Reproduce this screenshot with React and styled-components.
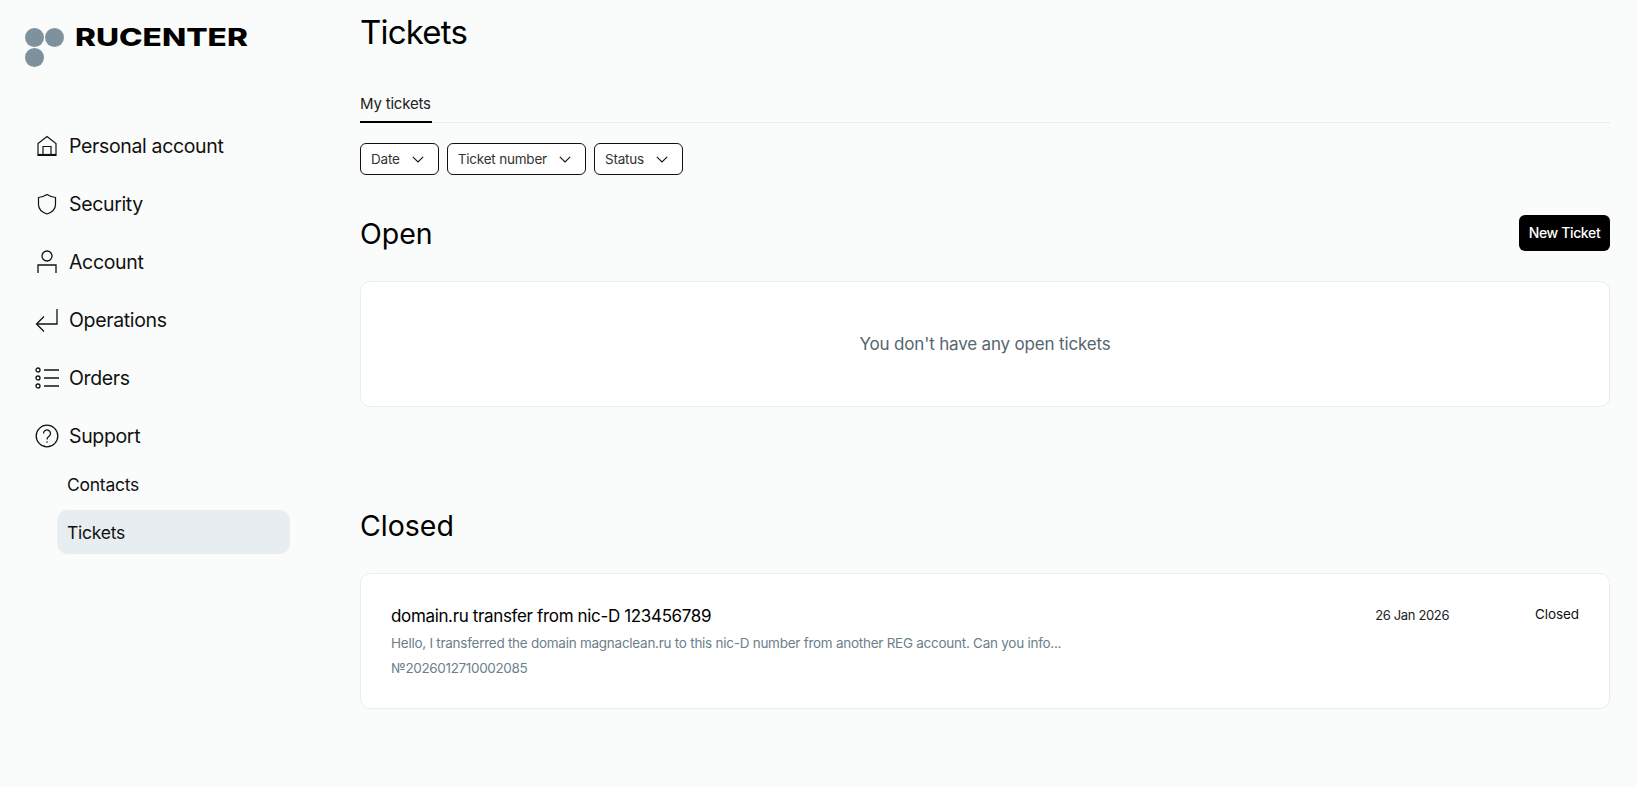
import React from 'react';
import styled, { createGlobalStyle } from 'styled-components';

const GlobalStyle = createGlobalStyle`
  html, body {
    margin: 0;
    padding: 0;
    background: #fafcfb;
  }
  body {
    font-family: Inter, "Noto Sans", "Liberation Sans", sans-serif;
    color: #000;
  }
  * {
    box-sizing: border-box;
  }
`;

const Chevron = () => (
  <svg width="12" height="7" viewBox="0 0 12 7" fill="none">
    <path d="M.8.8L6 6 11.200.8" stroke="#111" strokeWidth="1.1" />
  </svg>
);

const HomeIcon = () => (
  <svg width="22" height="22" viewBox="0 0 22 22" fill="none" stroke="#111" strokeWidth="1.2">
    <path d="M2 20.500V8.500L11 1.500l9 7v12z" />
    <path d="M7 20.500v-9h8v9" />
    <path d="M2 19.500h18" />
  </svg>
);

const ShieldIcon = () => (
  <svg width="22" height="22" viewBox="0 0 22 22" fill="none" stroke="#111" strokeWidth="1.2">
    <path d="M2.500 4.500Q7 4 11 1.500q4 2.500 8.500 3v7c0 4.500-4 8-8.500 9.500-4.500-1.500-8.500-5-8.500-9.500z" />
  </svg>
);

const UserIcon = () => (
  <svg width="22" height="24" viewBox="0 0 22 24" fill="none" stroke="#111" strokeWidth="1.3">
    <circle cx="11" cy="6" r="5" />
    <path d="M2 23v-8h18v8" />
  </svg>
);

const ReturnIcon = () => (
  <svg width="24" height="24" viewBox="0 0 24 24" fill="none" stroke="#111" strokeWidth="1.3">
    <path d="M22 1v15H2" />
    <path d="M9 8.500L1.500 16 9 23.500" />
  </svg>
);

const ListIcon = () => (
  <svg width="24" height="22" viewBox="0 0 24 22" fill="none" stroke="#111" strokeWidth="1.3">
    <circle cx="3" cy="3" r="2" />
    <circle cx="3" cy="11" r="2" />
    <circle cx="3" cy="19" r="2" />
    <path d="M9 3h15M9 11h15M9 19h15" />
  </svg>
);

const HelpIcon = () => (
  <svg width="24" height="24" viewBox="0 0 24 24" fill="none" stroke="#111" strokeWidth="1.3">
    <circle cx="12" cy="12" r="10.800" />
    <path d="M8.500 9.500a3.500 3.500 0 1 1 5.500 2.800c-1.300.9-2 1.500-2 3.200" />
    <circle cx="12" cy="18" r=".8" fill="#111" stroke="none" />
  </svg>
);

const Page = styled.div`
  display: flex;
  width: 1637px;
  height: 787px;
  overflow: hidden;
`;

const Sidebar = styled.aside`
  width: 360px;
  flex: none;
  padding: 28px 0 0 25px;
`;

const LogoRow = styled.div`
  display: flex;
  gap: 11px;
`;

const Dots = styled.div`
  display: grid;
  grid-template-columns: 19px 19px;
  grid-auto-rows: 19px;
  gap: 1px;
`;

const Dot = styled.span`
  border-radius: 50%;
  background: #7d929c;
`;

const LogoText = styled.div`
  font-family: Inter, sans-serif;
  font-weight: 800;
  font-size: 24px;
  line-height: 20px;
  height: 20px;
  transform: scaleX(1.32);
  transform-origin: left center;
`;

const Nav = styled.nav`
  margin-top: 50px;
  display: flex;
  flex-direction: column;
`;

const NavItem = styled.a`
  display: flex;
  align-items: center;
  height: 58px;
  font-size: 19.500px;
  letter-spacing: -0.35px;
  color: #111;
`;

const NavIcon = styled.span`
  display: flex;
  justify-content: center;
  width: 24px;
  margin-left: 10px;
  margin-right: 10px;
`;

const SubNav = styled.div`
  margin: -3px 0 0 32px;
  display: flex;
  flex-direction: column;
  gap: 4px;
  width: 233px;
`;

const SubItem = styled.a`
  display: flex;
  align-items: center;
  height: 44px;
  padding-left: 10px;
  border-radius: 10px;
  font-size: 17.500px;
  letter-spacing: -0.25px;
  color: #111;
  background: ${(p) => (p.$active ? '#e7edf0' : 'transparent')};
`;

const Main = styled.main`
  width: 1250px;
  flex: none;
`;

const Title = styled.h1`
  margin: 0;
  height: 92px;
  padding-top: 10px;
  font-size: 33px;
  line-height: 44px;
  font-weight: 400;
  letter-spacing: -0.8px;
`;

const Tabs = styled.div`
  display: flex;
  height: 31px;
  border-bottom: 1px solid #e8edee;
`;

const Tab = styled.div`
  height: 31px;
  font-size: 15px;
  line-height: 24px;
  letter-spacing: -0.2px;
  color: #222;
  border-bottom: 2px solid #000;
  padding-right: 1px;
`;

const Filters = styled.div`
  display: flex;
  gap: 8px;
  margin-top: 20px;
`;

const Filter = styled.button`
  display: flex;
  align-items: center;
  gap: 12px;
  height: 32px;
  padding: 0 14px 0 10px;
  background: #fff;
  border: 1px solid #111;
  border-radius: 6px;
  font-family: inherit;
  font-size: 13.500px;
  letter-spacing: -0.2px;
  color: #333;
`;

const SectionHead = styled.div`
  display: flex;
  justify-content: space-between;
  align-items: center;
  height: 36px;
  margin-top: ${(p) => p.$top}px;
`;

const SectionTitle = styled.h2`
  margin: 0;
  font-size: 28.500px;
  font-weight: 400;
  letter-spacing: 0;
`;

const NewTicket = styled.button`
  width: 91px;
  height: 36px;
  padding: 0 0 1px;
  border: none;
  border-radius: 6px;
  background: #000;
  color: #fff;
  font-family: inherit;
  font-size: 14px;
  font-weight: 500;
  letter-spacing: -0.35px;
`;

const EmptyCard = styled.div`
  display: flex;
  align-items: center;
  justify-content: center;
  height: 126px;
  margin-top: 30px;
  background: #fff;
  border: 1px solid #e8edee;
  border-radius: 10px;
  font-size: 17px;
  letter-spacing: -0.17px;
  color: #55666e;
`;

const TicketCard = styled.div`
  display: flex;
  justify-content: space-between;
  height: 136px;
  margin-top: 30px;
  padding: 30px;
  background: #fff;
  border: 1px solid #e8edee;
  border-radius: 10px;
`;

const TicketBody = styled.div`
  display: flex;
  flex-direction: column;
`;

const TicketTitle = styled.div`
  font-size: 17px;
  line-height: 24px;
  letter-spacing: -0.35px;
`;

const TicketText = styled.div`
  margin-top: 3px;
  font-size: 13.500px;
  line-height: 24px;
  letter-spacing: -0.26px;
  color: #6c8089;
`;

const TicketNumber = styled(TicketText)`
  margin-top: 1px;
  letter-spacing: -0.35px;
`;

const TicketMeta = styled.div`
  display: flex;
  gap: 86px;
`;

const TicketDate = styled.div`
  font-size: 13px;
  line-height: 22px;
  letter-spacing: -0.35px;
  color: #222;
`;

const TicketStatus = styled.div`
  font-size: 13.500px;
  line-height: 20px;
  letter-spacing: -0.1px;
  color: #111;
`;

const navItems = [
  ['Personal account', <HomeIcon />],
  ['Security', <ShieldIcon />],
  ['Account', <UserIcon />],
  ['Operations', <ReturnIcon />],
  ['Orders', <ListIcon />],
  ['Support', <HelpIcon />],
];

const App = () => {
  return (
    <Page>
      <GlobalStyle />
      <Sidebar>
        <LogoRow>
          <Dots>
            <Dot />
            <Dot />
            <Dot />
          </Dots>
          <LogoText>RUCENTER</LogoText>
        </LogoRow>
        <Nav>
          {navItems.map(([label, icon]) => (
            <NavItem key={label}>
              <NavIcon>{icon}</NavIcon>
              {label}
            </NavItem>
          ))}
        </Nav>
        <SubNav>
          <SubItem>Contacts</SubItem>
          <SubItem $active>Tickets</SubItem>
        </SubNav>
      </Sidebar>
      <Main>
        <Title>Tickets</Title>
        <Tabs>
          <Tab>My tickets</Tab>
        </Tabs>
        <Filters>
          <Filter>Date <Chevron /></Filter>
          <Filter>Ticket number <Chevron /></Filter>
          <Filter>Status <Chevron /></Filter>
        </Filters>
        <SectionHead $top={40}>
          <SectionTitle>Open</SectionTitle>
          <NewTicket>New Ticket</NewTicket>
        </SectionHead>
        <EmptyCard>You don't have any open tickets</EmptyCard>
        <SectionHead $top={100}>
          <SectionTitle>Closed</SectionTitle>
        </SectionHead>
        <TicketCard>
          <TicketBody>
            <TicketTitle>domain.ru transfer from nic-D 123456789</TicketTitle>
            <TicketText>Hello, I transferred the domain magnaclean.ru to this nic-D number from another REG account. Can you info...</TicketText>
            <TicketNumber>№2026012710002085</TicketNumber>
          </TicketBody>
          <TicketMeta>
            <TicketDate>26 Jan 2026</TicketDate>
            <TicketStatus>Closed</TicketStatus>
          </TicketMeta>
        </TicketCard>
      </Main>
    </Page>
  );
};

export default App;
